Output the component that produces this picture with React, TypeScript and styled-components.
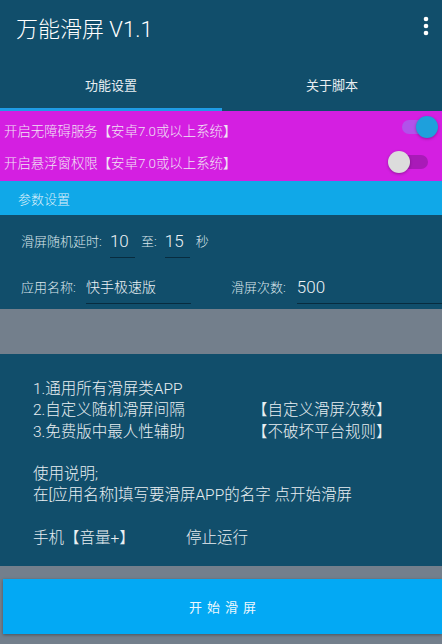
import React from 'react'
import styled, { createGlobalStyle } from 'styled-components'

const GlobalStyle = createGlobalStyle`
  html, body { margin: 0; padding: 0; }
  body {
    width: 442px;
    height: 644px;
    overflow: hidden;
    background: #737f8c;
    font-family: Roboto, "Noto Sans CJK SC", sans-serif;
  }
`

const App = () => {
  return (
    <Page>
      <GlobalStyle />
      <Toolbar>
        <Title>万能滑屏 V1.1</Title>
        <MoreButton aria-label="more">
          <svg width="6" height="20" viewBox="0 0 6 20">
            <circle cx="3" cy="3" r="2.3" fill="#fff" />
            <circle cx="3" cy="10" r="2.3" fill="#fff" />
            <circle cx="3" cy="17" r="2.3" fill="#fff" />
          </svg>
        </MoreButton>
      </Toolbar>
      <Tabs>
        <Tab active>功能设置</Tab>
        <Tab>关于脚本</Tab>
      </Tabs>

      <PermissionPanel>
        <SwitchRow>
          <SwitchLabel>开启无障碍服务【安卓7.0或以上系统】</SwitchLabel>
          <Switch on />
        </SwitchRow>
        <SwitchRow>
          <SwitchLabel>开启悬浮窗权限【安卓7.0或以上系统】</SwitchLabel>
          <Switch />
        </SwitchRow>
      </PermissionPanel>

      <SectionHeader>参数设置</SectionHeader>

      <ParamPanel>
        <ParamRow>
          <FieldLabel>滑屏随机延时: </FieldLabel>
          <Field width={25}>10</Field>
          <FieldLabel gap={6}>至: </FieldLabel>
          <Field width={25}>15</Field>
          <FieldLabel gap={6}>秒</FieldLabel>
        </ParamRow>
        <ParamRow>
          <FieldLabel after={7}>应用名称: </FieldLabel>
          <Field width={105} cjk>快手极速版</Field>
          <FieldLabel gap={40} after={8}>滑屏次数: </FieldLabel>
          <Field grow>500</Field>
        </ParamRow>
      </ParamPanel>

      <Spacer h={45} />

      <InfoPanel>
        <InfoLine>1.通用所有滑屏类APP</InfoLine>
        <InfoLine>
          <InfoCol>2.自定义随机滑屏间隔</InfoCol>【自定义滑屏次数】
        </InfoLine>
        <InfoLine>
          <InfoCol>3.免费版中最人性辅助</InfoCol>【不破坏平台规则】
        </InfoLine>
        <InfoLine />
        <InfoLine>使用说明;</InfoLine>
        <InfoLine>在[应用名称]填写要滑屏APP的名字 点开始滑屏</InfoLine>
        <InfoLine />
        <InfoLine>
          <InfoCol narrow>手机【音量+】</InfoCol>停止运行
        </InfoLine>
      </InfoPanel>

      <Spacer h={13} />
      <StartButton>开始滑屏</StartButton>
    </Page>
  )
}

export default App

const Page = styled.div`
  width: 442px;
  height: 644px;
  display: flex;
  flex-direction: column;
  background: #737f8c;
  color: #e6edf1;
`
const Toolbar = styled.div`
  height: 56px;
  padding: 0 16px;
  background: #114e6b;
  display: flex;
  align-items: center;
  justify-content: space-between;
`
const Title = styled.div`
  font-size: 22px;
  font-weight: 300;
  color: #ffffff;
  margin-top: -2px;
`
const MoreButton = styled.div`
  width: 12px;
  display: flex;
  justify-content: center;
  margin-right: -6px;
  margin-top: -4px;
`
const Tabs = styled.div`
  height: 55px;
  background: #114e6b;
  display: flex;
`
const Tab = styled.div<{ active?: boolean }>`
  flex: 1;
  display: flex;
  align-items: center;
  justify-content: center;
  font-size: 13px;
  color: #e8eef2;
  box-sizing: border-box;
  padding-top: 4px;
  border-bottom: 3px solid ${(p) => (p.active ? '#1f9ce6' : 'transparent')};
  &:first-child { flex: 0 0 222px; }
`
const PermissionPanel = styled.div`
  background: #d41fe1;
  padding: 3px 0 3px;
  display: flex;
  flex-direction: column;
`
const SwitchRow = styled.div`
  height: 32px;
  display: flex;
  align-items: center;
  justify-content: space-between;
  padding: 0 8px 0 4px;
`
const SwitchLabel = styled.div`
  font-size: 13.4px;
  font-weight: 300;
  color: #f1e4f4;
  white-space: nowrap;
`
const Switch = styled.div<{ on?: boolean }>`
  position: relative;
  width: 30px;
  height: 14px;
  border-radius: 7px;
  margin-right: ${(p) => (p.on ? '2px' : '6px')};
  margin-top: ${(p) => (p.on ? '-6px' : '0')};
  background: ${(p) => (p.on ? '#b152ea' : '#a91ab8')};
  &::after {
    content: '';
    position: absolute;
    top: -4px;
    left: ${(p) => (p.on ? '14px' : '-10px')};
    width: 22px;
    height: 22px;
    border-radius: 50%;
    background: ${(p) => (p.on ? '#1ea0dc' : '#dcdcdc')};
    box-shadow: 0 1px 3px rgba(0, 0, 0, 0.3);
  }
`
const SectionHeader = styled.div`
  height: 34px;
  background: #10a8e8;
  display: flex;
  align-items: center;
  padding-left: 18px;
  font-size: 13px;
  font-weight: 300;
  color: #dff1fb;
`
const ParamPanel = styled.div`
  height: 94px;
  background: #114e6b;
  padding: 11px 0 0 21px;
  box-sizing: border-box;
  display: flex;
  flex-direction: column;
  gap: 14px;
`
const ParamRow = styled.div`
  display: flex;
  align-items: flex-start;
  height: 32px;
`
const FieldLabel = styled.div<{ gap?: number; after?: number }>`
  font-size: 13px;
  font-weight: 300;
  color: #dbe6ec;
  margin-left: ${(p) => p.gap || 0}px;
  margin-right: ${(p) => p.after ?? 5}px;
  line-height: 32px;
  white-space: pre;
`
const Field = styled.div<{ width?: number; grow?: boolean; cjk?: boolean }>`
  width: ${(p) => (p.grow ? 'auto' : `${p.width}px`)};
  flex: ${(p) => (p.grow ? 1 : 'none')};
  height: 31px;
  line-height: 30px;
  font-size: ${(p) => (p.cjk ? '14px' : '17px')};
  font-weight: 300;
  color: #eef3f6;
  border-bottom: 1.5px solid #082c3f;
  white-space: nowrap;
`
const Spacer = styled.div<{ h: number }>`
  height: ${(p) => p.h}px;
  flex: none;
`
const InfoPanel = styled.div`
  height: 212px;
  box-sizing: border-box;
  background: #114e6b;
  padding: 25px 0 0 33px;
  display: flex;
  flex-direction: column;
`
const InfoLine = styled.div`
  height: 21.3px;
  line-height: 21.3px;
  font-size: 15.5px;
  font-weight: 300;
  color: #e9eff2;
  white-space: nowrap;
  display: flex;
`
const InfoCol = styled.span<{ narrow?: boolean }>`
  display: inline-block;
  width: ${(p) => (p.narrow ? '153px' : '219px')};
`
const StartButton = styled.div`
  height: 55px;
  margin-left: 3px;
  background: #03a9f4;
  box-shadow: 0 1px 3px rgba(0, 0, 0, 0.35);
  display: flex;
  align-items: center;
  justify-content: center;
  font-size: 13px;
  letter-spacing: 5px;
  padding-left: 5px;
  color: #eef8fd;
`
